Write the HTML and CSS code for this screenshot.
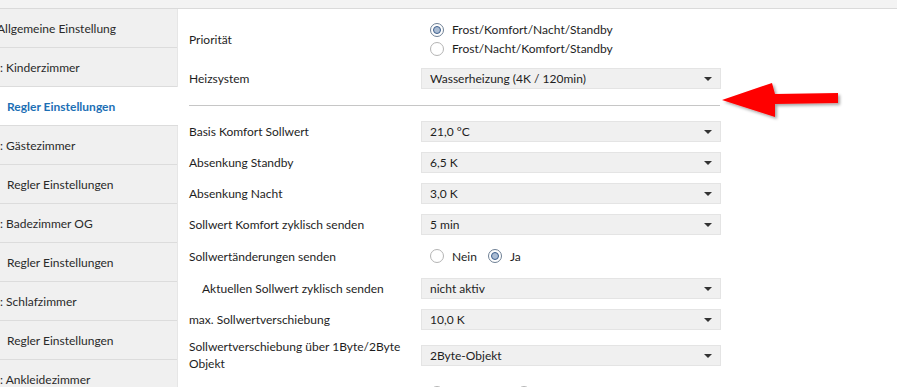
FILE: index.html
```html
<!DOCTYPE html>
<html lang="de">
<head>
  <meta charset="UTF-8" />
  <title>Regler Einstellungen</title>
  <link rel="stylesheet" href="styles.css">
</head>
<body>

  <div class="topbar"></div>

  <div class="main">
    <nav class="sidebar">
      <div class="item"><span class="shift">Allgemeine Einstellung</span></div>
      <div class="item"><span class="shift2">1: Kinderzimmer</span></div>
      <div class="item sub active">Regler Einstellungen</div>
      <div class="item"><span class="shift2">2: Gästezimmer</span></div>
      <div class="item sub">Regler Einstellungen</div>
      <div class="item"><span class="shift2">3: Badezimmer OG</span></div>
      <div class="item sub">Regler Einstellungen</div>
      <div class="item"><span class="shift2">0: Schlafzimmer</span></div>
      <div class="item sub">Regler Einstellungen</div>
      <div class="item"><span class="shift2">5: Ankleidezimmer</span></div>
    </nav>

    <section class="content">
      <div class="row tall">
        <div class="label">Priorität</div>
        <div class="control radios stacked">
          <label class="radio"><span class="dot on"></span>Frost/Komfort/Nacht/Standby</label>
          <label class="radio"><span class="dot"></span>Frost/Nacht/Komfort/Standby</label>
        </div>
      </div>
      <div class="row">
        <div class="label">Heizsystem</div>
        <div class="control select">Wasserheizung (4K / 120min)</div>
      </div>

      <hr class="sep">

      <div class="row">
        <div class="label">Basis Komfort Sollwert</div>
        <div class="control select">21,0 °C</div>
      </div>
      <div class="row">
        <div class="label">Absenkung Standby</div>
        <div class="control select">6,5 K</div>
      </div>
      <div class="row">
        <div class="label">Absenkung Nacht</div>
        <div class="control select">3,0 K</div>
      </div>
      <div class="row">
        <div class="label">Sollwert Komfort zyklisch senden</div>
        <div class="control select">5 min</div>
      </div>
      <div class="row radio-row">
        <div class="label">Sollwertänderungen senden</div>
        <div class="control radios">
          <label class="radio"><span class="dot"></span>Nein</label>
          <label class="radio"><span class="dot on"></span>Ja</label>
        </div>
      </div>
      <div class="row">
        <div class="label indent">Aktuellen Sollwert zyklisch senden</div>
        <div class="control select">nicht aktiv</div>
      </div>
      <div class="row">
        <div class="label">max. Sollwertverschiebung</div>
        <div class="control select">10,0 K</div>
      </div>
      <div class="row two-line">
        <div class="label">Sollwertverschiebung über 1Byte/2Byte<br>Objekt</div>
        <div class="control select">2Byte-Objekt</div>
      </div>
      <div class="row radio-row">
        <div class="label"></div>
        <div class="control radios wide">
          <label class="radio"><span class="dot"></span>&nbsp;</label>
          <label class="radio"><span class="dot"></span>&nbsp;</label>
        </div>
      </div>
    </section>
  </div>

  <svg class="arrow" width="130" height="50" viewBox="0 0 130 50">
    <defs>
      <filter id="shadow" x="-10%" y="-20%" width="130%" height="150%">
        <feDropShadow dx="2" dy="2" stdDeviation="1.5" flood-color="#000" flood-opacity="0.35"/>
      </filter>
    </defs>
    <polygon filter="url(#shadow)" fill="#ff0000"
      points="2,20 52,3 55,14 118,13 118,23 55,24 55,37"/>
  </svg>

</body>
</html>
```

FILE: styles.css
```css
body {
  margin: 0;
  font-family: Lato, "Noto Sans", sans-serif;
  font-size: 12px;
  color: #1e1e1e;
  background: white;
  width: 897px;
  height: 387px;
  overflow: hidden;
  position: relative;
}
.topbar {
  height: 8px;
  background: #f3f3f3;
  border-bottom: 1px solid #dadada;
}
.main {
  display: flex;
}
.sidebar {
  width: 177px;
  flex: none;
  background: #f0f0f0;
  border-right: 1px solid #e6e6e6;
}
.item {
  height: 38px;
  line-height: 40px;
  border-bottom: 1px solid #dcdcdc;
  overflow: hidden;
  white-space: nowrap;
  color: #2a2a2a;
}
.item .shift {
  margin-left: -3px;
}
.item .shift2 {
  margin-left: -7px;
}
.item.sub {
  padding-left: 7px;
}
.item.active {
  background: white;
  color: #1c6fb5;
  font-weight: 700;
  margin-right: -1px;
}
.content {
  flex: 1;
  padding: 11px 0 0 11px;
}
.row {
  display: flex;
  align-items: center;
  height: 21px;
  margin-bottom: 10px;
}
.row.tall {
  height: 38px;
  margin-bottom: 10px;
}
.row.radio-row {
  height: 22px;
  margin-bottom: 11px;
}
.row.two-line {
  height: 34px;
  margin-top: -2px;
}
.label {
  width: 232px;
  flex: none;
  line-height: 17px;
  padding-right: 10px;
  box-sizing: border-box;
}
.label.indent {
  padding-left: 13px;
}
.control {
  width: 300px;
  box-sizing: border-box;
}
.select {
  height: 21px;
  line-height: 19px;
  background: #f0f0f0;
  border: 1px solid #e4e4e4;
  padding: 0 8px;
  position: relative;
}
.select::after {
  content: "";
  position: absolute;
  right: 8px;
  top: 8px;
  border-left: 4px solid transparent;
  border-right: 4px solid transparent;
  border-top: 4px solid #333;
}
.radios {
  display: flex;
  gap: 11px;
  padding-left: 9px;
}
.radios.stacked {
  flex-direction: column;
  gap: 0;
}
.radios.wide {
  gap: 62px;
}
.radio {
  display: flex;
  align-items: center;
  height: 19px;
}
.dot {
  width: 14px;
  height: 14px;
  border: 1px solid #b4b4b4;
  border-radius: 50%;
  background: white;
  box-sizing: border-box;
  margin-right: 8px;
  position: relative;
}
.dot.on {
  border-color: #6e7f94;
}
.dot.on::after {
  content: "";
  position: absolute;
  left: 2px;
  top: 2px;
  width: 8px;
  height: 8px;
  border-radius: 50%;
  box-sizing: border-box;
  background: #aabcd3;
  border: 1px solid #3d5f8c;
}
.sep {
  border: none;
  border-top: 1px solid #c6c6c6;
  width: 531px;
  margin: 16px 0 15px 0;
}
.arrow {
  position: absolute;
  left: 720px;
  top: 80px;
}
```
